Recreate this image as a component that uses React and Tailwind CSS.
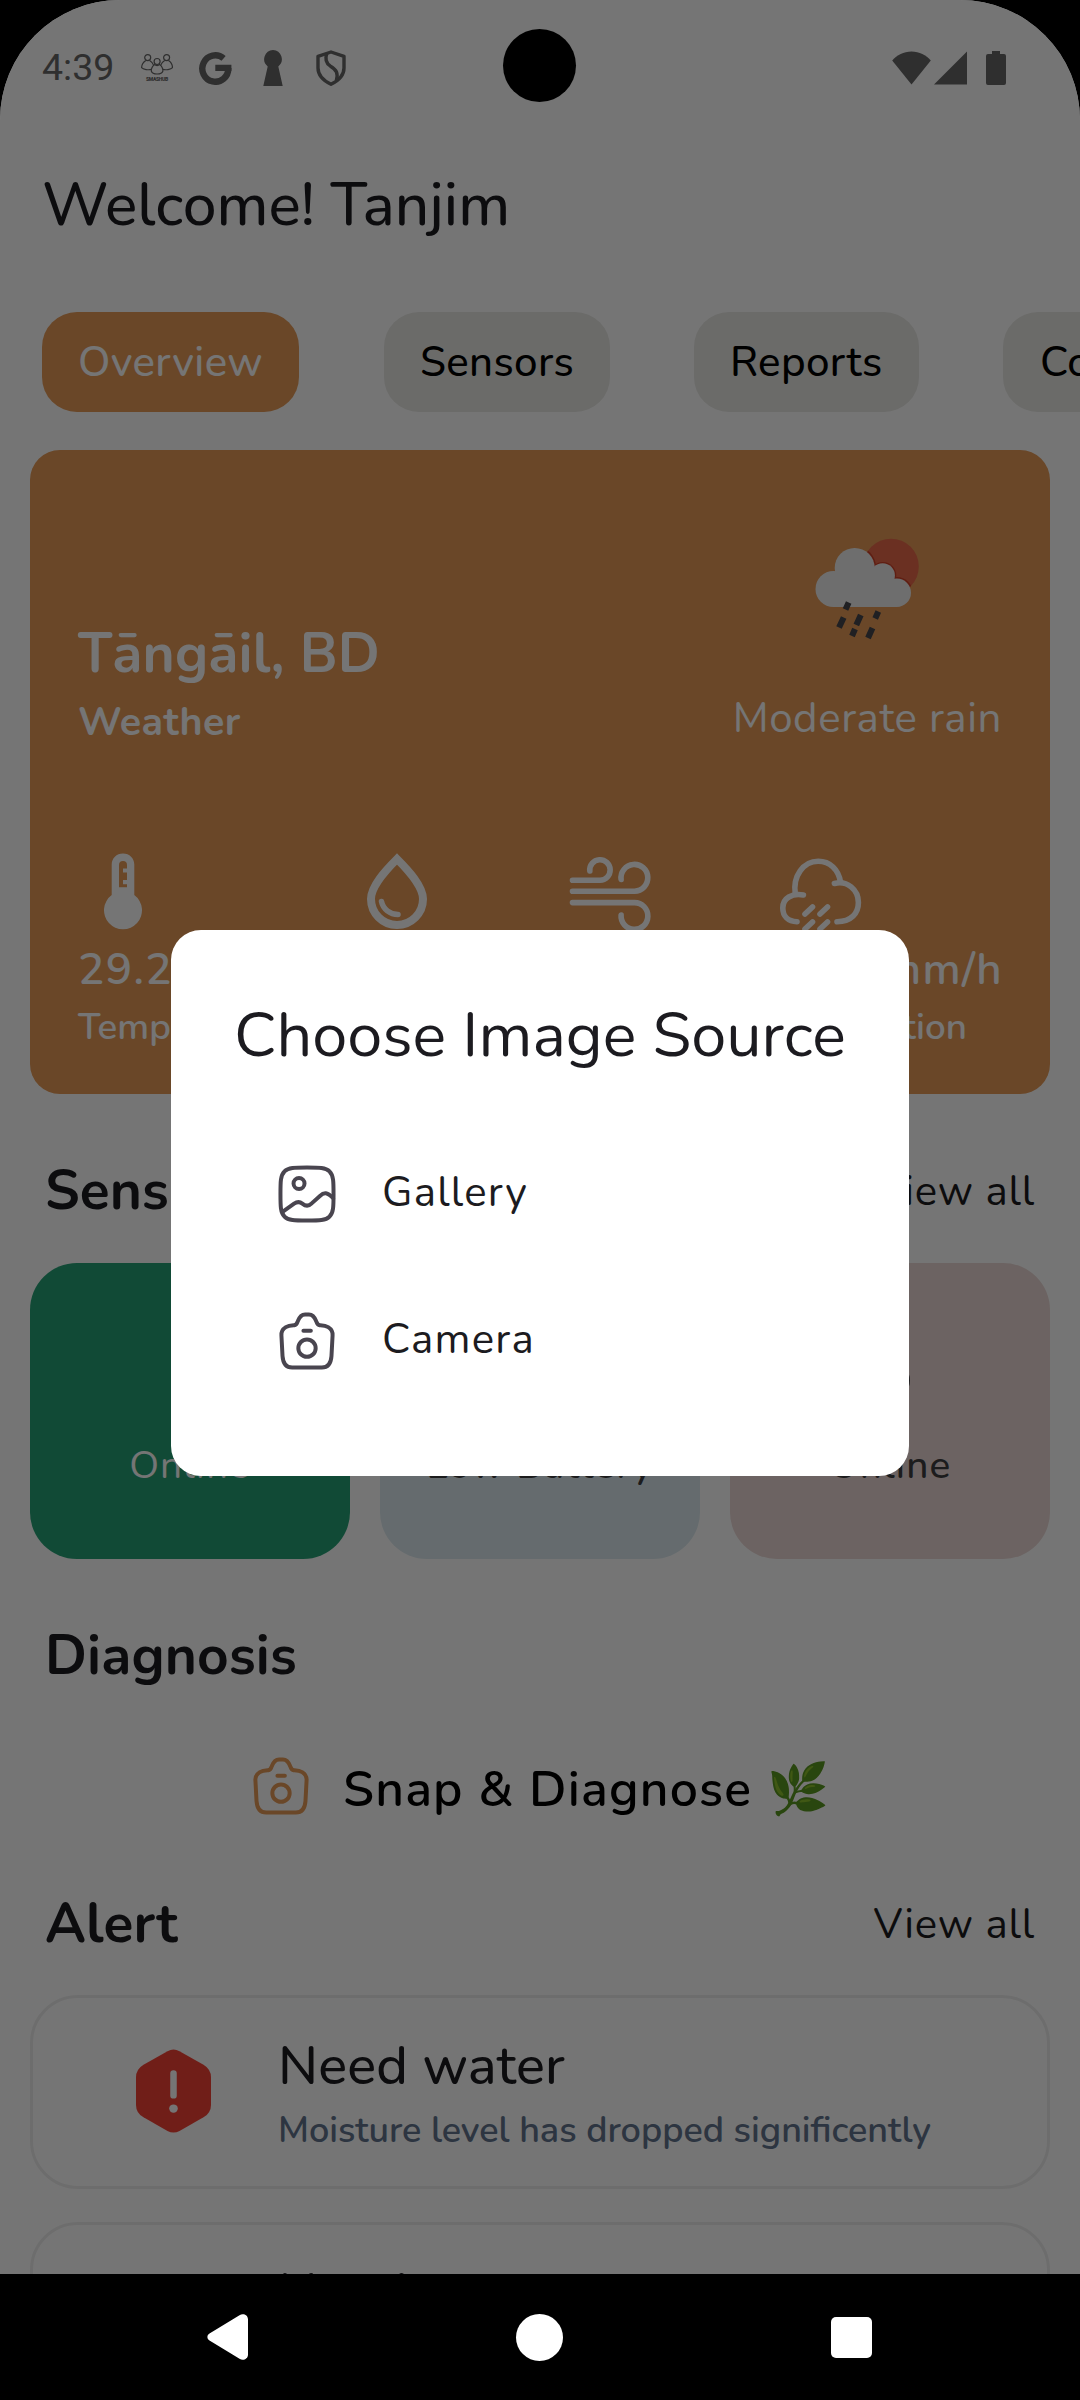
import React from "react";

const tabs = [
  { label: "Overview", cls: "mr-[85px] w-[257px] bg-[#e69b58] pl-[36px] text-white tracking-[0.35px]" },
  { label: "Sensors", cls: "mr-[84px] w-[226px] bg-[#e9e9e5] pl-[36px] text-black tracking-[0.35px]" },
  { label: "Reports", cls: "mr-[84px] w-[225px] bg-[#e9e9e5] pl-[36px] text-black tracking-[0.35px]" },
  { label: "Control", cls: "w-[230px] bg-[#e9e9e5] pl-[37px] text-black tracking-[0.35px]" },
];

function PeopleIcon() {
  return (
    <div className="flex h-[28px] w-[32px] flex-col items-center">
      <svg width="32" height="22" viewBox="0 0 32 22" fill="none" stroke="currentColor" strokeWidth="1.2" className="shrink-0">
        <circle cx="6.7" cy="3.6" r="3" />
        <circle cx="25.6" cy="3.6" r="3" />
        <circle cx="16.1" cy="7.5" r="3" />
        <path d="M4.8 6.4C2.4 8 .6 10.6.6 13.6c1.600 2 7 2.600 9.700 1.800" />
        <path d="M8.600 6.400c1.800 1 3.400 2.800 4.100 5" />
        <path d="M27.500 6.400c2.400 1.600 4 4.200 4 7.200-1.600 2-7 2.600-9.700 1.800" />
        <path d="M23.700 6.400c-1.800 1-3.400 2.800-4.100 5" />
        <path d="M13.800 10.500c-2 1.200-3.500 3.400-3.500 6.500 1.200 4 10.400 4 11.600 0 0-3.100-1.500-5.300-3.500-6.500-1 1.400-3.600 1.400-4.600 0Z" />
      </svg>
      <span className="mt-px font-['Roboto'] text-[5px] leading-[5px] font-black tracking-[-0.3px]">SMASHUB</span>
    </div>
  );
}

function GoogleIcon() {
  return (
    <svg width="33" height="34" viewBox="0 0 33 34" fill="none" stroke="currentColor" strokeWidth="6.400">
      <path d="M24.600 7.400A13 13.200 0 1 0 29.300 17.200" />
      <path d="M16.300 16.900H32.400" />
    </svg>
  );
}

function KeyholeIcon() {
  return (
    <svg width="20" height="36" viewBox="0 0 20 36" fill="currentColor">
      <path d="M10 0a9.200 9.200 0 0 0-5.300 16.400L.3 36h19.400l-4.400-19.600A9.200 9.200 0 0 0 10 0Z" />
    </svg>
  );
}

function ShieldIcon() {
  return (
    <svg width="30" height="36" viewBox="0 0 30 36" fill="none" stroke="currentColor" strokeWidth="3.400" strokeLinejoin="round">
      <path d="M15 2 28 6.300V18c0 7-5 12.400-13 16.300C7 30.400 2 25 2 18V6.300Z" />
      <path d="M10.800 3.500C8.800 9 9.700 13 14.500 16.200c6 3.600 8 7 5.800 14.500" />
    </svg>
  );
}

function CameraIcon() {
  return (
    <svg width="66" height="66" viewBox="0 0 24 24" fill="none" stroke="currentColor" strokeWidth="1.450" strokeLinecap="round" strokeLinejoin="round" className="shrink-0">
      <path d="M7.400 6.250C8.200 6.100 8.300 5.600 8.600 4.900 9.200 3.300 9.900 2.350 11.300 2.350H12.700C14.100 2.350 14.800 3.300 15.400 4.900 15.700 5.600 15.800 6.100 16.600 6.250 17.300 6.300 18.600 6.300 19.700 6.950 20.900 7.700 21.400 8.700 21.300 10L20.900 17.500C20.700 20.300 19.600 21.650 17.400 21.650H6.600C4.400 21.650 3.300 20.300 3.100 17.500L2.700 10C2.600 8.700 3.100 7.700 4.300 6.950 5.400 6.300 6.700 6.300 7.400 6.250Z" />
      <circle cx="12" cy="14.600" r="3.150" />
      <path d="M10.700 8.250H13.400" />
    </svg>
  );
}

function GalleryIcon() {
  return (
    <svg width="66" height="66" viewBox="0 0 24 24" fill="none" stroke="currentColor" strokeWidth="1.450" strokeLinecap="round" strokeLinejoin="round" className="shrink-0">
      <path d="M2.350 12C2.350 7.500 2.350 5.200 3.800 3.800 5.200 2.350 7.500 2.350 12 2.350S18.800 2.350 20.200 3.800C21.650 5.200 21.650 7.500 21.650 12S21.650 18.800 20.200 20.200C18.800 21.650 16.500 21.650 12 21.650S5.200 21.650 3.800 20.200C2.350 18.800 2.350 16.500 2.350 12Z" />
      <circle cx="9.100" cy="8.200" r="2" />
      <path d="M3.100 18.500 7.300 15.500C8.500 14.700 9.300 14.700 10.300 15.500 11.500 16.500 12.500 16.600 13.600 15.500L16.700 12.700C18.200 11.300 19.300 11.300 21.500 13.500" />
    </svg>
  );
}

function RainSunIcon() {
  return (
    <svg width="104" height="102" viewBox="0 0 104 102">
      <defs>
        <clipPath id="sun-disc"><circle cx="76" cy="28.500" r="27.800" /></clipPath>
      </defs>
      <circle cx="76" cy="28.500" r="27.800" fill="#e96a4b" />
      <g clipPath="url(#sun-disc)" fill="#cf4229">
        <circle cx="40" cy="29" r="21" />
        <circle cx="67.800" cy="37.500" r="13.500" />
        <circle cx="82" cy="54.500" r="15.500" />
      </g>
      <g fill="#f0f0f0">
        <circle cx="18.500" cy="51" r="18" />
        <circle cx="39.700" cy="30" r="20" />
        <circle cx="67.600" cy="37.500" r="12.300" />
        <circle cx="81.800" cy="54.800" r="14.200" />
        <path d="M18.500 69H82V48L67 32H30L18 40Z" />
      </g>
      <g stroke="#46474c" strokeWidth="6">
        <path d="M33.700 64.500 30.500 71.500M28.700 79.500 24 89.500M45.800 77 41.300 87M63.300 73.500 60.200 80.500M40 91 37 98M57.500 90 53 100" />
      </g>
    </svg>
  );
}

function ThermometerIcon() {
  return (
    <svg width="90" height="80" viewBox="0 0 90 80" fill="none">
      <path d="M45 0.500C38.500 0.500 33.700 5.400 33.700 11.500V42A19 19 0 1 0 56.300 42V11.500C56.300 5.400 51.500 0.500 45 0.500Z" fill="#fff" />
      <path d="M41 34.300V12a4 4 0 0 1 8 0V15.500H45V19.500H49V27H45V31.300H49V34.300Z" fill="#e69b58" />
    </svg>
  );
}

function DropIcon() {
  return (
    <svg width="90" height="80" viewBox="0 0 90 80" fill="none" stroke="#fff">
      <path d="M45 6C34 17 19 33 19 46a26 26 0 0 0 52 0C71 33 56 17 45 6Z" strokeWidth="8" strokeLinejoin="miter" />
      <path d="M29.500 48.500C31 56 38 61.500 46 61.500" strokeWidth="5.500" strokeLinecap="round" />
    </svg>
  );
}

function WindIcon() {
  return (
    <svg width="90" height="80" viewBox="0 0 90 80" fill="none" stroke="#fff" strokeWidth="5.600" strokeLinecap="round">
      <path d="M7.500 27.200H35A10.200 10.200 0 1 0 24.800 18" />
      <path d="M7.500 38.200H69.500A13.400 13.400 0 1 0 56.100 26.500" />
      <path d="M7.500 49.600H69.500A13.400 13.400 0 1 1 56.100 62" />
    </svg>
  );
}

function CloudRainIcon() {
  return (
    <svg width="90" height="84" viewBox="0 0 90 84" fill="none" stroke="#fff" strokeWidth="5.600" strokeLinecap="round">
      <path d="M22 68.700C13 68.500 7.800 63 7.800 55 7.800 45 17 40 28.400 42" />
      <path d="M20.300 41C17.500 23 28.500 8.300 43.200 8.300 55 8.300 63.500 16.500 65.500 29" />
      <path d="M59.400 30.500C72 27 83.400 36.500 83.400 49.500 83.400 60 76.500 68.700 62 68.700" />
      <path d="M37.500 54 30 61M52.500 54 45 61M37.500 69 30 76M52.500 69 45 76" />
    </svg>
  );
}

function HexAlertIcon() {
  return (
    <svg width="75" height="84" viewBox="0 0 75 86" preserveAspectRatio="none" fill="none">
      <path d="M31.500 2.200Q37.500-1 43.500 2.200L67.500 16Q75 20.500 75 29V57Q75 65.500 67.500 70L43.500 84Q37.500 87.200 31.500 84L7.500 70Q0 65.500 0 57V29Q0 20.500 7.500 16Z" fill="#f44336" />
      <path d="M37.500 25V47.500" stroke="#fff" strokeWidth="6.500" strokeLinecap="round" />
      <circle cx="37.500" cy="61" r="4.300" fill="#fff" />
    </svg>
  );
}

function SensorIcon() {
  return (
    <svg width="39" height="39" viewBox="0 0 40 40" fill="none" stroke="currentColor" strokeWidth="4">
      <circle cx="20" cy="20" r="18" />
    </svg>
  );
}

const stats = [
  { icon: <ThermometerIcon />, value: "29.2°C", label: "Temp", labelCls: "" },
  { icon: <DropIcon />, value: "84%", label: "Humidity", labelCls: "" },
  { icon: <WindIcon />, value: "2.1 m/s", label: "Wind", labelCls: "" },
  { icon: <CloudRainIcon />, value: "0.55 mm/h", label: "Precipitation", labelCls: "-ml-[19px]" },
];

const sensors = [
  { status: "Online", cls: "bg-[#25a176] text-white" },
  { status: "Low Battery", cls: "bg-[#dceaef] font-medium" },
  { status: "Online", cls: "bg-[#ebd8d5] font-medium" },
];

function SectionHeader({ title, className, action }) {
  return (
    <div className={`flex justify-between pr-[45px] pl-[45px] ${className}`}>
      <h2 className="text-[55px] leading-none font-bold tracking-[0.13px]">{title}</h2>
      {action && <span className="mt-[8px] text-[42px] leading-none tracking-[0.8px]">View all</span>}
    </div>
  );
}

function AlertCard() {
  return (
    <div className="mx-[30px] flex h-[194px] shrink-0 rounded-[48px] border-[3px] border-[#eeeeee] pl-[103px]">
      <div className="mt-[51px] w-[142px] shrink-0"><HexAlertIcon /></div>
      <div>
        <h3 className="mt-[41px] text-[54px] leading-none font-medium tracking-[0.2px]">Need water</h3>
        <p className="mt-[20px] text-[36px] leading-none font-semibold whitespace-nowrap text-slate-500">Moisture level has dropped significently</p>
      </div>
    </div>
  );
}

export default function App() {
  return (
    <div className="flex h-[2400px] w-[1080px] flex-col overflow-hidden bg-black font-['Nunito','Lato',sans-serif]">
      <div className="relative flex h-[2274px] shrink-0 flex-col overflow-hidden rounded-t-[120px] bg-white text-[#1c1b20]">
        <header className="flex h-[135px] shrink-0 items-center justify-between pr-[74px] pl-[42px] text-[#666666]">
          <div className="flex items-center">
            <span className="w-[99px] font-['Roboto'] text-[37.5px]">4:39</span>
            <PeopleIcon />
            <div className="ml-[26px]"><GoogleIcon /></div>
            <div className="ml-[31px]"><KeyholeIcon /></div>
            <div className="ml-[33px]"><ShieldIcon /></div>
          </div>
          <div className="flex items-center">
            <svg width="39" height="34" viewBox="0 0 39 34" fill="currentColor"><path d="M19.500 33.500.2 9.500C5 4 11.600.500 19.500.500S34 4 38.800 9.500Z" /></svg>
            <svg width="33" height="34" viewBox="0 0 33 34" fill="currentColor" className="ml-[3px]"><path d="M0 33.500 33 .5V33.500Z" /></svg>
            <svg width="20" height="34" viewBox="0 0 20 34" fill="currentColor" className="ml-[19px]"><path d="M6 0H14V3H18Q20 3 20 5V32Q20 34 18 34H2Q0 34 0 32V5Q0 3 2 3H6Z" /></svg>
          </div>
        </header>

        <h1 className="h-[177px] shrink-0 pt-[40px] pl-[42px] text-[60.4px] leading-none font-medium">Welcome! Tanjim</h1>

        <nav className="flex h-[100px] shrink-0 pl-[42px]">
          {tabs.map((t) => (
            <div key={t.label} className={`flex shrink-0 items-center rounded-[35px] pt-[2px] text-[42px] leading-none font-medium ${t.cls}`}>{t.label}</div>
          ))}
        </nav>

        <section className="mx-[30px] mt-[38px] flex h-[644px] shrink-0 flex-col rounded-[30px] bg-[#e69b58] px-[48px] text-white">
          <div className="flex h-[403px] justify-between">
            <div>
              <div className="mt-[176px] text-[55.1px] leading-none font-bold tracking-[0.1px]">Tāngāil, BD</div>
              <div className="mt-[22px] text-[39.4px] leading-none font-bold tracking-[0.4px]">Weather</div>
            </div>
            <div className="flex flex-col items-center">
              <div className="mt-[88px]"><RainSunIcon /></div>
              <div className="mt-[58px] text-[42px] leading-none font-normal tracking-[0.6px]">Moderate rain</div>
            </div>
          </div>
          <div className="grid grid-cols-[274px_213px_210px_1fr]">
            {stats.map((s) => (
              <div key={s.label} className="whitespace-nowrap">
                <div className="h-[95px]">{s.icon}</div>
                <div className="text-[44px] leading-none font-semibold tracking-[1.35px]">{s.value}</div>
                <div className={`mt-[17px] text-[36.75px] leading-none font-semibold ${s.labelCls}`}>{s.label}</div>
              </div>
            ))}
          </div>
        </section>

        <SectionHeader title="Sensors" action className="h-[169px] shrink-0 pt-[69px]" />
        <div className="flex h-[296px] shrink-0 gap-[30px] px-[30px] text-[38.8px] leading-none tracking-[1.1px] text-[#3e3e40]">
          {sensors.map((s, i) => (
            <div key={i} className={`flex flex-1 flex-col items-center rounded-[47px] pt-[98px] ${s.cls}`}>
              <SensorIcon />
              <span className="mt-[47px]">{s.status}</span>
            </div>
          ))}
        </div>

        <SectionHeader title="Diagnosis" className="mt-[69px] shrink-0" />
        <div className="mt-[70px] flex h-[66px] shrink-0 items-center pl-[248px]">
          <div className="text-[#e69b58]"><CameraIcon /></div>
          <span className="mt-[9px] ml-[29px] text-[49.875px] leading-none font-semibold tracking-[1.2px] whitespace-nowrap text-black">Snap &amp; Diagnose 🌿</span>
        </div>
        <SectionHeader title="Alert" action className="mt-[77px] h-[99px] shrink-0" />
        <div className="flex flex-col gap-[33px]">
          <AlertCard />
          <AlertCard />
        </div>

        <div className="absolute inset-0 bg-black/54" />

        <div role="dialog" className="absolute top-[930px] left-[171px] flex h-[546px] w-[738px] flex-col rounded-[30px] bg-white">
          <h2 className="h-[190px] pt-[74px] pl-[63px] text-[63px] leading-none whitespace-nowrap">Choose Image Source</h2>
          <div className="flex h-[147px] items-center pl-[103px]">
            <span className="text-[#49454f]"><GalleryIcon /></span>
            <span className="mb-[2px] ml-[42px] text-[42px] leading-none tracking-[1.2px]">Gallery</span>
          </div>
          <div className="flex h-[147px] items-center pl-[103px]">
            <span className="text-[#49454f]"><CameraIcon /></span>
            <span className="mb-[2px] ml-[42px] text-[42px] leading-none tracking-[1.3px]">Camera</span>
          </div>
        </div>

        <div className="absolute top-[29px] left-[503px] size-[73px] rounded-full bg-black" />
      </div>

      <nav className="flex h-[126px] shrink-0 items-center pl-[207px]">
        <svg width="41" height="46" viewBox="0 0 41 46" fill="#fff"><path d="M32.500 1.200C36 -1 41 .8 41 5.500V40.500C41 45.200 36 47 32.500 44.800L2.500 26.500C-.3 24.800-.3 21.200 2.500 19.500Z" /></svg>
        <div className="ml-[268px] size-[47px] rounded-full bg-white" />
        <div className="ml-[268px] size-[41px] rounded-[5px] bg-white" />
      </nav>
    </div>
  );
}
